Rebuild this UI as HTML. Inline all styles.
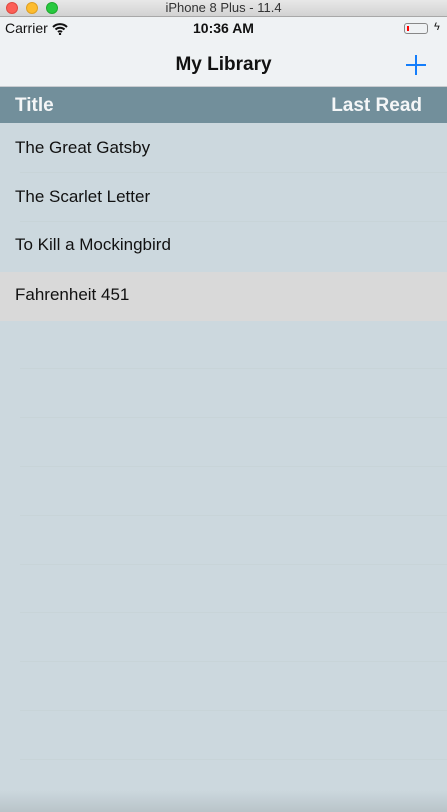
<!DOCTYPE html>
<html><head><style>
body{margin:0;width:447px;height:812px;overflow:hidden;font-family:"Liberation Sans",sans-serif;background:#ccd8de;position:relative}
.tb{position:absolute;top:0;left:0;width:447px;height:17px;background:linear-gradient(#e8e8e8,#d2d2d2);border-bottom:1px solid #a8a8a8;box-sizing:border-box;text-align:center;font-size:13px;line-height:16px;color:#333}
.dot{position:absolute;top:2px;width:12px;height:12px;border-radius:50%}
.sb{position:absolute;top:17px;left:0;width:447px;height:70px;background:#eff2f4;border-bottom:1px solid #c8ccd0;box-sizing:border-box}
.hd{position:absolute;top:87px;left:0;width:447px;height:36px;background:#728f9b;color:#f4f6f7;font-weight:bold;font-size:19px}
.row{position:absolute;left:0;width:447px;font-size:17px;color:#111;box-sizing:border-box;padding-left:15px}
.sep{position:absolute;left:20px;right:0;height:1px;background:#c8d4d8}
</style></head><body>
<div class="tb">iPhone 8 Plus - 11.4
<div class="dot" style="left:6px;background:#fc5f57;border:1px solid #de4a41;box-sizing:border-box"></div>
<div class="dot" style="left:26px;background:#fdbc2e;border:1px solid #dea024;box-sizing:border-box"></div>
<div class="dot" style="left:46px;background:#28c93f;border:1px solid #1fa92f;box-sizing:border-box"></div>
</div>
<div class="sb">
<div style="position:absolute;left:5px;top:3px;font-size:14px;color:#111">Carrier</div>
<svg style="position:absolute;left:52px;top:6px" width="16" height="12" viewBox="0 0 16 12"><path d="M1 4a10 10 0 0 1 14 0M3.5 6.5a6.5 6.5 0 0 1 9 0M6 9a3 3 0 0 1 4 0" stroke="#111" stroke-width="2" fill="none"/><circle cx="8" cy="11" r="1.2" fill="#111"/></svg>
<div style="position:absolute;left:0;width:447px;top:3px;text-align:center;font-size:14px;font-weight:bold;color:#111">10:36 AM</div>
<div style="position:absolute;left:404px;top:6px;width:24px;height:11px;border:1px solid #888;border-radius:3px;box-sizing:border-box"><div style="margin:2px;width:2px;height:5px;background:#f00"></div></div>
<div style="position:absolute;left:434px;top:4px;font-size:11px;color:#111">ϟ</div>
<div style="position:absolute;left:0;width:447px;top:37px;text-align:center;font-size:19px;font-weight:bold;color:#111">My Library</div>
<svg style="position:absolute;left:405px;top:37px" width="22" height="22"><path d="M11 1v20M1 11h20" stroke="#147efb" stroke-width="2"/></svg>
</div>
<div class="hd"><span style="position:absolute;left:15px;top:8px">Title</span><span style="position:absolute;right:25px;top:8px">Last Read</span></div>
<div class="row" style="top:123px;height:49px;line-height:49px">The Great Gatsby</div>
<div class="sep" style="top:172px"></div>
<div class="row" style="top:172px;height:49px;line-height:49px">The Scarlet Letter</div>
<div class="sep" style="top:221px"></div>
<div class="row" style="top:221px;height:50px;line-height:48px">To Kill a Mockingbird</div>
<div class="row" style="top:272px;height:49px;line-height:46px;background:#d9d9d9">Fahrenheit 451</div>
<div class="sep" style="top:368px"></div>
<div class="sep" style="top:417px"></div>
<div class="sep" style="top:466px"></div>
<div class="sep" style="top:515px"></div>
<div class="sep" style="top:564px"></div>
<div class="sep" style="top:612px"></div>
<div class="sep" style="top:661px"></div>
<div class="sep" style="top:710px"></div>
<div class="sep" style="top:759px"></div>
<div style="position:absolute;left:0;top:790px;width:447px;height:22px;background:linear-gradient(#ccd8de,#b9c4c9)"></div>
</body></html>
